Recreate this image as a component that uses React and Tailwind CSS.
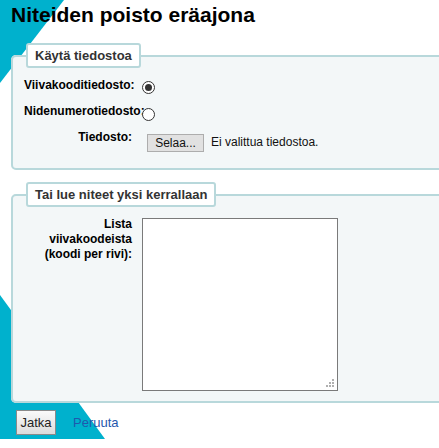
import React from 'react';

const font = { fontFamily: '"Liberation Sans", Arial, sans-serif' };

// Decorative cyan background shapes
const Backdrop = () => (
  <svg className="absolute left-0 top-0 pointer-events-none" width="439" height="448" viewBox="0 0 439 448">
    <polygon points="0,0 64,0 0,83" fill="#00b1cd" />
    <polygon points="0,295 105,439 0,439" fill="#00b1cd" />
  </svg>
);

const Radio = ({ checked, className = '' }) => (
  <span
    className={`ml-[10px] flex h-[13px] w-[13px] shrink-0 items-center justify-center rounded-full border border-[#333] bg-white ${className}`}
  >
    {checked && <span className="h-[7px] w-[7px] rounded-full bg-[#333]" />}
  </span>
);

const Legend = ({ children }) => (
  <legend className="ml-[13px] rounded-[3px] border-2 border-[#b8d8db] bg-white px-[7px] py-[3px] text-[13px] font-bold leading-[15px] text-[#333]">
    {children}
  </legend>
);

export default function App() {
  return (
    <div className="relative h-[448px] w-[439px] overflow-hidden bg-white text-[12px] text-black" style={font}>
      <Backdrop />
      <div className="relative pl-[11px]">
        <h1 className="mt-[3px] text-[21px] font-bold leading-[24px]">Niteiden poisto eräajona</h1>

        <fieldset className="mt-[16px] w-[470px] rounded-[5px] border-2 border-[#b8d8db] bg-[#f3f7f8] pb-[13px] pt-[10px]">
          <Legend>Käytä tiedostoa</Legend>
          <div className="flex h-[26px] items-start pl-[11px]">
            <span className="w-[108px] shrink-0 text-right font-bold leading-[15px]">Viivakooditiedosto:</span>
            <Radio checked className="mt-[3px]" />
          </div>
          <div className="flex h-[26px] items-start pl-[11px]">
            <span className="w-[108px] shrink-0 whitespace-nowrap text-left font-bold leading-[15px]">Nidenumerotiedosto:</span>
            <Radio className="mt-[4px]" />
          </div>
          <div className="flex h-[25px] items-start pl-[11px]">
            <span className="w-[108px] shrink-0 text-right font-bold leading-[15px]">Tiedosto:</span>
            <span className="ml-[15px] mt-[4px] flex h-[18px] w-[57px] items-center justify-center border border-[#adadad] bg-[#e1e1e1] text-[#111]">
              Selaa...
            </span>
            <span className="ml-[7px] mt-[5px] leading-[15px] text-[#111]">Ei valittua tiedostoa.</span>
          </div>
        </fieldset>

        <fieldset className="mt-[12px] w-[470px] rounded-[5px] border-2 border-[#b8d8db] bg-[#f3f7f8] pb-[10px] pt-[10px]">
          <Legend>Tai lue niteet yksi kerrallaan</Legend>
          <div className="flex items-start pl-[11px]">
            <span className="w-[108px] shrink-0 text-right font-bold leading-[15px]">
              Lista
              <br />
              viivakoodeista
              <br />
              (koodi per rivi):
            </span>
            <div className="relative ml-[10px] mt-[1px] h-[173px] w-[196px] border border-[#7a7a7a] bg-white">
              <svg className="absolute bottom-[2px] right-[2px]" width="9" height="9" viewBox="0 0 9 9">
                <rect x="6" y="0" width="2" height="2" fill="#b0b0b0" />
                <rect x="3" y="3" width="2" height="2" fill="#b0b0b0" />
                <rect x="6" y="3" width="2" height="2" fill="#b0b0b0" />
                <rect x="0" y="6" width="2" height="2" fill="#b0b0b0" />
                <rect x="3" y="6" width="2" height="2" fill="#b0b0b0" />
                <rect x="6" y="6" width="2" height="2" fill="#b0b0b0" />
              </svg>
            </div>
          </div>
        </fieldset>

        <div className="mt-[7px] flex items-center pl-[5px]">
          <span className="flex h-[25px] w-[40px] items-center justify-center border border-[#8a8a8a] bg-gradient-to-b from-[#fafafa] to-[#dcdcdc] text-[13px] text-[#222]">
            Jatka
          </span>
          <a href="#" className="ml-[17px] text-[13px] text-[#1f58ad]">Peruuta</a>
        </div>
      </div>
    </div>
  );
}
